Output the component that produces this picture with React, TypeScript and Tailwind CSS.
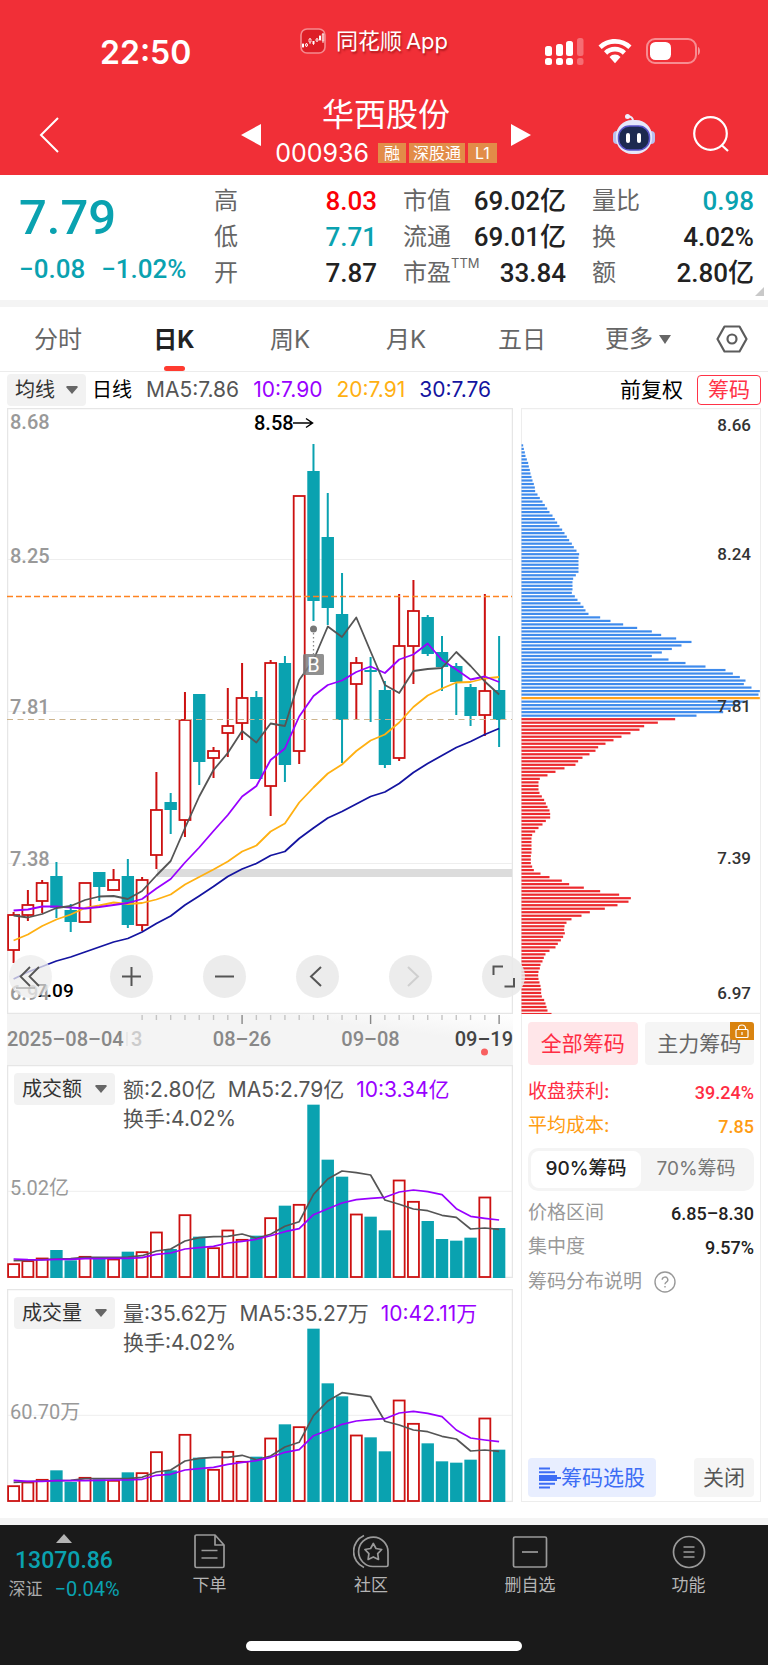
import React from "react";

type Kind = "u" | "d";
// kind, high, body top, body bottom, low (chart space)
type Candle = [Kind, number, number, number, number];

const CANDLES: Candle[] = [
  ["u", 912, 915, 950, 963], ["u", 890, 905, 915, 921], ["u", 880, 883, 901, 913],
  ["d", 862, 876, 908, 918], ["d", 904, 910, 922, 932], ["u", 883, 883, 922, 922],
  ["d", 872, 872, 887, 901], ["u", 869, 880, 890, 890], ["d", 859, 876, 925, 928],
  ["u", 877, 880, 925, 931], ["u", 772, 810, 855, 869], ["d", 793, 802, 810, 834],
  ["u", 692, 720, 820, 837], ["d", 694, 694, 762, 785], ["u", 747, 751, 758, 778],
  ["u", 688, 726, 733, 757], ["u", 663, 698, 723, 740], ["d", 691, 697, 779, 779],
  ["u", 660, 663, 786, 816], ["d", 656, 663, 765, 782], ["u", 496, 496, 751, 764],
  ["d", 444, 471, 601, 621], ["d", 493, 537, 608, 625], ["d", 573, 614, 720, 763],
  ["u", 657, 663, 684, 719], ["d", 657, 670, 672, 722], ["d", 681, 690, 765, 768],
  ["u", 594, 646, 758, 761], ["u", 580, 611, 646, 684], ["d", 615, 617, 654, 656],
  ["d", 636, 652, 667, 691], ["d", 663, 666, 682, 715], ["d", 684, 687, 716, 726],
  ["u", 594, 691, 715, 736], ["d", 636, 690, 720, 747],
];

const MA5 = [915.5, 917.5, 914, 908, 906, 900, 896.5, 896, 899, 891, 875.5, 861, 828, 796.5, 770, 753, 731, 742.5, 723.5, 726, 680, 660, 626.5, 637, 617.5, 651.5, 685, 693, 671, 669, 668, 652, 666, 681.5, 694.5];
const MA10 = [910.5, 909.5, 906.5, 906.5, 907.5, 908.5, 907, 905, 903, 899, 888.5, 879, 862.5, 847.5, 831, 815, 796.5, 786, 760, 748.5, 716.5, 696, 685, 680.5, 672, 666.5, 673, 659.5, 654.5, 643.5, 660, 669.5, 679.5, 676.5, 682];
const MA20 = [940.5, 934.5, 926, 919.5, 914.5, 908, 905.5, 902.5, 904, 903, 899.5, 894.5, 884.5, 877, 869.5, 861.5, 851.5, 845.5, 831.5, 823.5, 802.5, 787.5, 773.5, 764.5, 751, 740.5, 734.5, 722.5, 707, 695.5, 688.5, 682.5, 682, 678.5, 677];
const MA30 = [979, 972, 966.5, 961, 957, 952, 947, 942, 938.5, 932, 923.5, 916, 905, 896, 886.5, 876.5, 869, 863.5, 855.5, 851.5, 838.5, 828, 818, 811.5, 804, 796.5, 792, 783.5, 772.5, 763.5, 755.5, 747.5, 741.5, 734.5, 728.5];

// Volume panes are stored at three units per pixel
const AMOUNT = {
  bars: [612, 603, 595, 571, 602, 590, 596, 598, 576, 576, 517, 568, 465, 531, 564, 511, 539, 528, 474, 438, 434, 135, 300, 351, 463, 471, 512, 361, 425, 484, 538, 543, 534, 412, 505],
  ma5: [603, 602, 600, 598, 597, 593, 593, 593, 592, 588, 574, 568, 544, 534, 531, 530, 523, 536, 524, 500, 486, 404, 358, 334, 339, 346, 421, 434, 448, 453, 467, 473, 508, 505, 509],
  ma10: [598, 600, 601, 599, 599, 597, 597, 596, 596, 594, 584, 580, 568, 564, 560, 550, 545, 539, 528, 516, 507, 465, 447, 430, 420, 416, 413, 397, 391, 396, 405, 447, 470, 476, 481],
  top: 16,
  base: 655,
  grid: 395,
};
const VOLUME = {
  bars: [619, 608, 600, 573, 608, 594, 600, 603, 579, 580, 517, 573, 465, 535, 570, 516, 546, 532, 476, 435, 442, 148, 312, 351, 467, 474, 516, 362, 432, 492, 546, 550, 541, 416, 511],
  ma5: [609, 607, 605, 604, 603, 598, 598, 598, 598, 594, 578, 572, 545, 537, 534, 534, 528, 541, 530, 503, 489, 409, 365, 340, 346, 352, 426, 437, 452, 457, 471, 479, 515, 512, 516],
  ma10: [603, 606, 606, 604, 604, 604, 603, 602, 602, 600, 588, 585, 572, 568, 564, 555, 549, 544, 534, 519, 511, 469, 453, 435, 425, 421, 418, 401, 396, 402, 412, 452, 476, 482, 487],
  top: 29,
  base: 668,
  grid: 408,
};

// Share of chips held at each price step, from the highest price down
const CHIPS_ABOVE = [5, 7, 10, 12, 16, 20, 22, 25, 27, 30, 33, 37, 40, 41, 48, 55, 63, 70, 77, 84, 93, 100, 107, 114, 122, 129, 136, 143, 151, 157, 165, 173, 171, 171, 171, 171, 171, 163, 155, 153, 153, 153, 151, 160, 168, 177, 186, 192, 201, 236, 267, 305, 347, 391, 419, 464, 510, 480, 451, 421, 391, 441, 492, 552, 612, 634, 655, 672, 667, 690, 715, 711, 715, 670, 650, 628, 605, 525];
const CHIPS_BELOW = [461, 409, 368, 354, 327, 300, 276, 252, 230, 222, 204, 183, 170, 162, 129, 102, 78, 55, 51, 51, 51, 54, 61, 68, 73, 78, 84, 86, 86, 73, 63, 51, 41, 32, 30, 30, 30, 30, 30, 28, 28, 28, 32, 37, 57, 84, 121, 143, 187, 236, 293, 328, 321, 288, 250, 205, 180, 150, 135, 129, 128, 130, 125, 118, 109, 102, 84, 72, 67, 63, 57, 55, 51, 50, 51, 54, 57, 59, 59, 61, 68, 72, 75, 78, 90];
const AVERAGE_COST_ROW = 72;

const UP = "#cc1111";
const DOWN = "#0aa2b0";
const cx = (i: number) => 13.6 + 14.28 * i;
const line = (ys: number[]) => ys.map((y, i) => `${cx(i).toFixed(1)},${y.toFixed(1)}`).join(" ");

const NUM = "font-['Roboto','Noto_Sans_CJK_SC',sans-serif]";

function Header() {
  return (
    <header className="bg-[#f12f37] text-white">
      <div className="grid h-[82px] grid-cols-[1fr_auto_1fr] items-start">
        <div className="pl-[100px] pt-[33px] text-[32px] leading-10 font-semibold">22:50</div>
        <div className="flex items-center gap-2.5 pt-[25px] pr-5 text-[22px] leading-8 [text-shadow:1px_2px_2px_rgba(90,0,0,0.45)]">
          <svg width="26" height="26" viewBox="0 0 26 26" aria-hidden="true">
            <rect x="1" y="1" width="24" height="24" rx="6" fill="#dd1e26" stroke="#f58a8f" strokeWidth="1.6" />
            <path d="M3 15v5M6.500 15v4M10 10v6M13.500 13v4M17 10v4M20 7v6M23 5v10" stroke="#fff" strokeWidth=".8" />
            <path d="M2 16h2v3H2zM12.500 13h2v3h-2zM19 8h2v4h-2z" fill="#fff" />
            <path d="M5.500 16h2v2h-2zM9 11h2v3H9zM16 11h2v2h-2zM22.300 6h1.400v7h-1.400z" fill="#dd1e26" stroke="#fff" strokeWidth=".8" />
          </svg>
          <span className="flex gap-1"><span>同花顺</span><span>App</span></span>
        </div>
        <div className="flex items-center justify-end gap-3.5 pt-9 pr-[66px]">
          <svg width="40" height="30" viewBox="0 0 40 30" fill="#fff" aria-hidden="true">
            <rect x="1" y="10" width="7" height="10" rx="2.500" />
            <rect x="12" y="8" width="7" height="12" rx="2.500" />
            <rect x="22" y="5" width="7" height="15" rx="2.500" />
            <rect x="33" y="2" width="6.500" height="18" rx="2.500" opacity=".3" />
            <rect x="1" y="22" width="7" height="7" rx="2.500" />
            <rect x="12" y="22" width="7" height="7" rx="2.500" />
            <rect x="22" y="22" width="7" height="7" rx="2.500" />
            <rect x="33" y="22" width="6.500" height="7" rx="2.500" opacity=".3" />
          </svg>
          <svg width="34" height="26" viewBox="0 0 34 26" fill="#fff" aria-hidden="true">
            <path d="M17 1C10.500 1 4.700 3.500 .5 7.600l3.200 3.500A19 19 0 0 1 17 5.800a19 19 0 0 1 13.300 5.300l3.200-3.500A23.500 23.500 0 0 0 17 1z" />
            <path d="M17 8.700c-4.300 0-8.200 1.700-11 4.500l3.200 3.500A11 11 0 0 1 17 13.400a11 11 0 0 1 7.800 3.300l3.200-3.500a15.600 15.600 0 0 0-11-4.500z" />
            <path d="M17 16.600a8 8 0 0 0-5.500 2.300L17 25.300l5.500-6.400a8 8 0 0 0-5.500-2.300z" />
          </svg>
          <svg width="56" height="28" viewBox="0 0 56 28" aria-hidden="true">
            <rect x="1" y="2" width="49" height="24" rx="8" fill="none" stroke="#fff" strokeOpacity=".45" strokeWidth="2" />
            <rect x="4" y="5" width="21" height="18" rx="5.500" fill="#fff" />
            <path d="M52 10c2.600 1 2.600 7 0 8z" fill="#fff" opacity=".5" />
          </svg>
        </div>
      </div>
      <div className="grid h-[93px] grid-cols-[1fr_auto_1fr] items-center">
        <button type="button" aria-label="返回" className="ml-9 w-8">
          <svg width="28" height="40" viewBox="0 0 28 40" fill="none" stroke="#fff" strokeWidth="2" className="mt-3">
            <path d="M22 3 5 20l17 17" />
          </svg>
        </button>
        <div className="grid grid-cols-[20px_250px_20px] items-center pl-1">
          <button type="button" aria-label="上一只">
            <svg width="20" height="22" viewBox="0 0 20 22" fill="#fff" className="mt-3"><path d="M20 0v22L0 11z" /></svg>
          </button>
          <div className="pt-2">
            <h1 className="text-center text-[32px] leading-10 font-normal">华西股份</h1>
            <div className="flex items-center justify-center gap-[3px]">
              <span className="mr-1.5 text-[25px] leading-9">000936</span>
              <span className="h-5 bg-[#e28c48] px-1.5 text-[16px] leading-5">融</span>
              <span className="h-5 bg-[#e28c48] px-1 text-[16px] leading-5">深股通</span>
              <span className="h-5 bg-[#e28c48] px-[7px] text-[16px] leading-5">L1</span>
            </div>
          </div>
          <button type="button" aria-label="下一只">
            <svg width="20" height="22" viewBox="0 0 20 22" fill="#fff" className="mt-3"><path d="M0 0v22l20-11z" /></svg>
          </button>
        </div>
        <div className="mt-2.5 mr-[38px] flex items-center justify-end gap-9">
          <button type="button" aria-label="智能助手">
            <svg width="44" height="42" viewBox="0 0 44 42">
              <path d="M21 8c0-3-1-4.500-5-4.800" fill="none" stroke="#e9ebfb" strokeWidth="2" />
              <circle cx="15.500" cy="3.500" r="2.500" fill="#eef0ff" />
              <rect x="1" y="18" width="9" height="13" rx="4" fill="#b9c0ee" />
              <rect x="34" y="18" width="9" height="13" rx="4" fill="#b9c0ee" />
              <rect x="4" y="7" width="36" height="34" rx="16" fill="#e6e8fa" />
              <rect x="6.500" y="13" width="31" height="24" rx="11" fill="#1c2950" stroke="#5a55c9" strokeWidth="1.500" />
              <rect x="14" y="20" width="4" height="10" rx="2" fill="#fff" />
              <rect x="25" y="20" width="4" height="10" rx="2" fill="#fff" />
            </svg>
          </button>
          <button type="button" aria-label="搜索">
            <svg width="38" height="38" viewBox="0 0 38 38" fill="none" stroke="#fff" strokeWidth="2.200">
              <circle cx="18.500" cy="18.500" r="16.300" />
              <path d="m29.500 30 6.500 6" />
            </svg>
          </button>
        </div>
      </div>
    </header>
  );
}

function Stat({ label, value, color = "text-[#222]", sup }: { label: string; value: string; color?: string; sup?: string }) {
  return (
    <div className="flex items-center justify-between whitespace-nowrap">
      <dt className="flex text-[24px] leading-9 text-[#666]">
        {label}
        {sup && <span className="text-[13px] leading-4">{sup}</span>}
      </dt>
      <dd className={`${NUM} text-[26px] leading-9 font-medium ${color}`}>{value}</dd>
    </div>
  );
}

function Quote() {
  return (
    <section className="relative grid h-[125px] grid-cols-[169fr_163fr_163fr_162fr] gap-x-[26px] bg-white pt-2 pr-3.5 pl-[19px] max-sm:gap-x-2">
      <div className={`${NUM} font-medium whitespace-nowrap text-[#0aa2b0]`}>
        <div className="pt-1 text-[49px] leading-[62px]">7.79</div>
        <div className="flex gap-4 text-[26px] leading-10"><span>−0.08</span><span>−1.02%</span></div>
      </div>
      <dl>
        <Stat label="高" value="8.03" color="text-[#fb0007]" />
        <Stat label="低" value="7.71" color="text-[#0aa2b0]" />
        <Stat label="开" value="7.87" />
      </dl>
      <dl>
        <Stat label="市值" value="69.02亿" />
        <Stat label="流通" value="69.01亿" />
        <Stat label="市盈" value="33.84" sup="TTM" />
      </dl>
      <dl>
        <Stat label="量比" value="0.98" color="text-[#0aa2b0]" />
        <Stat label="换" value="4.02%" />
        <Stat label="额" value="2.80亿" />
      </dl>
      <svg width="9" height="9" viewBox="0 0 9 9" className="absolute right-1 bottom-1" aria-hidden="true"><path d="M9 0v9H0z" fill="#c9c9c9" /></svg>
    </section>
  );
}

const TABS = ["分时", "日K", "周K", "月K", "五日"];

function Tabs() {
  return (
    <nav className="grid h-[65px] grid-cols-[repeat(6,116fr)_72fr] border-b border-[#ececec] text-[24px] text-[#666]">
      {TABS.map((t) => (
        <button key={t} type="button" className={t === "日K" ? "flex flex-col items-center font-bold text-[#222]" : "flex flex-col items-center"}>
          <span className="pt-1 leading-[58px]">{t}</span>
          {t === "日K" && <span className="-mt-[3px] h-[5px] w-[21px] shrink-0 rounded-sm bg-[#ff3b30]" />}
        </button>
      ))}
      <button type="button" className="flex items-center justify-center gap-1.5">
        更多
        <svg width="12" height="9" viewBox="0 0 12 9" fill="#666"><path d="M0 0h12L6 9z" /></svg>
      </button>
      <button type="button" aria-label="设置" className="flex items-center justify-center">
        <svg width="32" height="28" viewBox="0 0 32 28" fill="none" stroke="#5c5c5c" strokeWidth="2.200">
          <path d="M8.500 1.500h15L30.500 14l-7 12.500h-15L1.500 14z" strokeLinejoin="round" />
          <circle cx="16" cy="14" r="4.500" />
        </svg>
      </button>
    </nav>
  );
}

function Picker({ label, value, className }: { label: string; value: string; className: string }) {
  return (
    <label className={`grid items-center rounded bg-[#f2f2f2] ${className}`}>
      <select aria-label={label} defaultValue={value} className="h-8 w-full appearance-none bg-transparent pl-2 text-[20px] leading-8 text-[#333] outline-none [grid-area:1/1]">
        <option>{value}</option>
      </select>
      <svg width="12" height="8" viewBox="0 0 12 8" fill="#666" className="pointer-events-none mr-2 justify-self-end [grid-area:1/1]" aria-hidden="true"><path d="M1 0h10l1 1-6 7-6-7z" /></svg>
    </label>
  );
}

function Legend() {
  return (
    <div className="flex h-9 items-center gap-3.5 px-[7px] text-[21px] whitespace-nowrap">
      <Picker label="指标" value="均线" className="-mr-2 w-[79px]" />
      <span className="text-[20px] text-black">日线</span>
      <span className="text-[#555]">MA5:7.86</span>
      <span className="text-[#9900ff]">10:7.90</span>
      <span className="text-[#ffb012]">20:7.91</span>
      <span className="text-[#1414a0]">30:7.76</span>
      <span className="ml-auto text-black">前复权</span>
      <button type="button" className="h-[30px] w-16 rounded border border-[#ff3347] leading-7 text-[#ff3347]">筹码</button>
    </div>
  );
}

function PriceChart() {
  const controls: { name: string; icon: React.ReactNode; off?: boolean }[] = [
    { name: "放大", icon: <path d="M12 21.500h19M21.500 12v19" /> },
    { name: "缩小", icon: <path d="M12 21.500h19" /> },
    { name: "左移", icon: <path d="M25 12 15 21.500 25 31" /> },
    { name: "右移", icon: <path d="M19 12l10 9.500L19 31" />, off: true },
    { name: "全屏", icon: <path d="M11.500 20v-8.500H21M32 23v8.500h-9.500" /> },
  ];
  return (
    <div className="relative">
      <svg viewBox="7 408 506 606" className={`block h-auto w-full ${NUM}`} role="img" aria-label="日K线">
        <rect x="7.500" y="408.500" width="505" height="605" fill="#fff" stroke="#e6e6e6" strokeWidth="1.500" />
        {[559.5, 711.5, 863.5].map((y) => <path key={y} d={`M8 ${y}h504`} stroke="#eeeeee" />)}
        <rect x="157" y="869" width="355" height="8" fill="#dcdcdc" />
        {CANDLES.map(([k, hi, top, bottom, lo], i) => {
          const x = cx(i);
          const c = k === "u" ? UP : DOWN;
          return (
            <g key={i} stroke={c} strokeWidth="2">
              <path d={`M${x} ${hi}V${top}M${x} ${bottom}V${lo}`} />
              {k === "u"
                ? <rect x={x - 5.500} y={top} width="11" height={bottom - top} fill="#fff" strokeWidth="1.800" />
                : <rect x={x - 6.200} y={top} width="12.400" height={bottom - top} fill={c} stroke="none" />}
            </g>
          );
        })}
        {[["8.68", 429], ["8.25", 563], ["7.81", 714], ["7.38", 866], ["6.94", 1000]].map(([t, y]) => (
          <text key={t} x="10" y={y} fontSize="20" fontWeight="500" fill="#999">{t}</text>
        ))}
        <path d="M7 596.500h505" stroke="#ff8320" strokeWidth="1.700" strokeDasharray="6 3" />
        <path d="M7 719.500h505" stroke="#cdb48d" strokeWidth="1.200" strokeDasharray="6 4.500" />
        <g fill="none" strokeWidth="1.800" strokeLinejoin="round">
          <polyline points={line(MA30)} stroke="#1414a0" />
          <polyline points={line(MA20)} stroke="#ffb012" />
          <polyline points={line(MA10)} stroke="#9900ff" />
          <polyline points={line(MA5)} stroke="#555" />
        </g>
        <rect x="303" y="654" width="21" height="21" rx="1.500" fill="#7d7d7d" fillOpacity=".85" />
        <text x="313.500" y="672" textAnchor="middle" fontSize="20" fill="#fff">B</text>
        <circle cx="313.500" cy="629" r="3.500" fill="#777" />
        <path d="M313.500 633v21" stroke="#888" strokeWidth="1.300" strokeDasharray="1.500 2.500" />
        <text x="254" y="430" fontSize="20" fontWeight="500">8.58</text>
        <path d="M293 423h19M306 418.500l6.500 4.500-6.500 4.500" fill="none" stroke="#000" strokeWidth="1.500" />
        <text x="36" y="997" fontSize="19" fontWeight="500">7.09</text>
        <path d="M16 988h19" stroke="#000" strokeWidth="1.500" />
      </svg>
      <div className="absolute -right-3 bottom-4 left-0.5 flex justify-between">
        <button type="button" aria-label="最早" className="size-[43px] rounded-full bg-[#ececec]/75">
          <svg viewBox="0 0 43 43" fill="none" stroke="#555" strokeWidth="1.800"><path d="M21 12l-9.500 9.500L21 31M30 12l-9.500 9.500L30 31" /></svg>
        </button>
        <div className="flex gap-[50px] max-sm:gap-2">
          {controls.map((c) => (
            <button key={c.name} type="button" aria-label={c.name} disabled={c.off} className="size-[43px] rounded-full bg-[#e9e9e9]/85">
              <svg viewBox="0 0 43 43" fill="none" stroke={c.off ? "#cfcfcf" : "#555"} strokeWidth="2">{c.icon}</svg>
            </button>
          ))}
        </div>
      </div>
    </div>
  );
}

function DateAxis() {
  const ticks = Array.from({ length: 26 }, (_, n) => n + 9);
  return (
    <svg viewBox="7 1014 506 51" className={`block h-auto w-full ${NUM}`} role="img" aria-label="日期">
      <defs>
        <linearGradient id="axis" x1="0" y1="0.800" x2="1" y2="0">
          <stop offset="0.700" stopColor="#f4f4f4" />
          <stop offset="1" stopColor="#ffffff" />
        </linearGradient>
      </defs>
      <rect x="7" y="1014" width="506" height="51" fill="url(#axis)" />
      {ticks.map((i) => (
        <path key={i} d={`M${cx(i)} 1015v${(i - 16) % 9 === 0 ? 9 : 5}`} stroke={(i - 16) % 9 === 0 ? "#888" : "#c4c4c4"} strokeWidth="1.400" />
      ))}
      <path d="M127 1032v14" stroke="#ddd" />
      <g fontSize="20" fontWeight="500" fill="#888">
        <text x="7" y="1046">2025–08–04</text>
        <text x="131" y="1046" fill="#ccc">3</text>
        <text x="242" y="1046" textAnchor="middle">08–26</text>
        <text x="370.500" y="1046" textAnchor="middle">09–08</text>
        <text x="513" y="1046" textAnchor="end" fill="#444">09–19</text>
      </g>
      <circle cx="484.500" cy="1052" r="3.500" fill="#f86060" />
    </svg>
  );
}

function VolumePane({ data, name, level, now, ma5, ma10 }: { data: typeof AMOUNT; name: string; level: string; now: string; ma5: string; ma10: string }) {
  const y = (v: number) => (v - data.top) / 3;
  const base = y(data.base);
  return (
    <div className="grid">
      <svg viewBox="7 0 506 213" className={`block h-auto w-full [grid-area:1/1] ${NUM}`} role="img" aria-label={name}>
        <rect x="7.500" y="0.500" width="505" height="212" fill="#fff" stroke="#e6e6e6" strokeWidth="1.500" />
        <path d={`M8 ${y(data.grid)}h504`} stroke="#eeeeee" />
        <text x="10" y={y(data.grid) + 4} fontSize="20" fill="#999">{level}</text>
        {data.bars.map((v, i) =>
          CANDLES[i][0] === "u"
            ? <rect key={i} x={cx(i) - 5.500} y={y(v) + 0.500} width="11" height={base - y(v) - 1.500} fill="#fff" stroke={UP} strokeWidth="1.800" />
            : <rect key={i} x={cx(i) - 6.200} y={y(v)} width="12.400" height={base - y(v)} fill={DOWN} />,
        )}
        <g fill="none" strokeWidth="1.700" strokeLinejoin="round">
          <polyline points={line(data.ma5.map(y))} stroke="#555" />
          <polyline points={line(data.ma10.map(y))} stroke="#9900ff" />
        </g>
      </svg>
      <div className="flex items-start gap-2 self-start px-[7px] pt-2 [grid-area:1/1]">
        <Picker label="副图指标" value={name} className="w-[101px] shrink-0" />
        <div className="text-[21px] leading-[29px] text-[#555]">
          <div className="flex gap-x-3 pt-0.5 whitespace-nowrap">
            <span>{now}</span>
            <span>{ma5}</span>
            <span className="text-[#9900ff]">{ma10}</span>
          </div>
          <div>换手:4.02%</div>
        </div>
      </div>
    </div>
  );
}

function ChipChart() {
  const rows = [...CHIPS_ABOVE, ...CHIPS_BELOW];
  return (
    <svg viewBox="521 408 240 606" className={`block h-auto w-full ${NUM}`} role="img" aria-label="筹码分布">
      <path d="M521 408.500h240M521 1013.500h240" stroke="#ededed" strokeWidth="1.500" />
      {rows.map((w, i) => {
        const y = 444.300 + 3.510 * i;
        const fill = i === AVERAGE_COST_ROW ? "#ffa11a" : i < CHIPS_ABOVE.length ? "#3f8bec" : "#ec2a2e";
        return <rect key={i} x="521.500" y={y} width={w / 3} height="2.200" fill={fill} />;
      })}
      <g fontSize="17" fontWeight="500" fill="#333" textAnchor="end">
        <text x="751" y="431">8.66</text>
        <text x="751" y="560">8.24</text>
        <text x="751" y="712">7.81</text>
        <text x="751" y="864">7.39</text>
        <text x="751" y="999">6.97</text>
      </g>
    </svg>
  );
}

function Pair({ label, value, labelColor, valueColor }: { label: string; value: string; labelColor: string; valueColor: string }) {
  return (
    <div className="flex h-[34px] items-center justify-between whitespace-nowrap">
      <dt className={`text-[19px] ${labelColor}`}>{label}</dt>
      <dd className={`${NUM} text-[18px] font-medium ${valueColor}`}>{value}</dd>
    </div>
  );
}

function ChipPanel() {
  return (
    <aside className="flex flex-col border-x border-b border-[#ededed] bg-white">
      <div className="-mx-px"><ChipChart /></div>
      <div className="flex flex-1 flex-col px-1.5 pt-2 pb-1">
        <div className="grid grid-cols-2 gap-[7px] text-[21px] leading-[43px] whitespace-nowrap">
          <button type="button" className="rounded bg-[#ffe6e9] text-[#ff2d43]">全部筹码</button>
          <button type="button" className="relative rounded bg-[#f5f5f5] text-[#666]">
            主力筹码
            <svg width="24" height="18" viewBox="0 0 24 18" className="absolute top-0 right-0" aria-hidden="true">
              <path d="M0 0h21a3 3 0 0 1 3 3v15H3a3 3 0 0 1-3-3z" fill="#d9830f" />
              <g fill="none" stroke="#fff" strokeWidth="1.200">
                <rect x="6" y="7.500" width="12" height="8" rx="1" />
                <path d="M8.500 7.500V6a3.500 3 0 0 1 7 0v1.500M12 10v3" />
              </g>
            </svg>
          </button>
        </div>
        <dl className="pt-2.5">
          <Pair label="收盘获利:" value="39.24%" labelColor="text-[#ff2d43]" valueColor="text-[#ff2d43]" />
          <Pair label="平均成本:" value="7.85" labelColor="text-[#ff9c12]" valueColor="text-[#ff9c12]" />
        </dl>
        <div className="mt-[5px] grid h-[43px] grid-cols-2 rounded-[10px] bg-[#f4f4f4] p-[3px] text-[19px]">
          <button type="button" className="rounded-lg bg-white font-medium text-[#222]">90%筹码</button>
          <button type="button" className="text-[#777]">70%筹码</button>
        </div>
        <dl className="pt-[5px]">
          <Pair label="价格区间" value="6.85–8.30" labelColor="text-[#999]" valueColor="text-[#222]" />
          <Pair label="集中度" value="9.57%" labelColor="text-[#999]" valueColor="text-[#222]" />
        </dl>
        <a href="#chips" className="flex h-9 items-center gap-3 text-[19px] text-[#999]">
          筹码分布说明
          <svg width="22" height="22" viewBox="0 0 22 22" fill="none" stroke="#999" strokeWidth="1.400" aria-hidden="true">
            <circle cx="11" cy="11" r="10" />
            <path d="M8.200 8.800a2.800 2.700 0 1 1 4.200 2.300c-1 .6-1.400 1-1.400 2.200M11 15v1.600" />
          </svg>
        </a>
        <div className="mt-auto flex justify-between text-[21px] leading-[39px] whitespace-nowrap">
          <button type="button" className="flex w-32 items-center justify-center rounded bg-[#e8eeff] text-[#3d6df5]">
            <svg width="22" height="22" viewBox="0 0 22 22" fill="none" stroke="#3d6df5" strokeWidth="2" aria-hidden="true">
              <path d="M0 1.500h11M0 5.300h16M0 9h18M0 11h22M0 13h18M0 16.800h16M0 20.500h11" />
            </svg>
            筹码选股
          </button>
          <button type="button" className="w-[60px] rounded bg-[#f5f5f5] text-[#555]">关闭</button>
        </div>
      </div>
    </aside>
  );
}

const ACTIONS: { label: string; icon: React.ReactNode }[] = [
  { label: "下单", icon: <path d="M3 2.500A1.500 1.500 0 0 1 4.500 1H23l9 10v21a1.500 1.500 0 0 1-1.500 1.500h-26A1.500 1.500 0 0 1 3 32zM23 1v10h9M9.500 16.500h16M9.500 24h16" /> },
  { label: "社区", icon: <><path d="M11 1.500a17.500 17.500 0 0 0 0 32M35 18v13a1.500 1.500 0 0 1-1.500 1.500H20A14.700 14.700 0 1 1 35 18z" /><path d="m20.300 9.500 2.700 5 5.700 1-4 4.200.8 5.700-5.200-2.500-5.200 2.500.8-5.700-4-4.200 5.700-1z" /></> },
  { label: "删自选", icon: <><rect x="1.500" y="3" width="33" height="30" rx="1.500" /><path d="M10 18h16" /></> },
  { label: "功能", icon: <><circle cx="18" cy="18" r="15.500" /><path d="M12.500 13h11M12.500 18h11M12.500 23h11" /></> },
];

function Footer() {
  return (
    <footer className="border-t-[7px] border-[#f4f4f4]">
      <div className="flex h-[140px] flex-col justify-between bg-[#1a1a1a] pb-3.5">
        <div className="grid grid-cols-[128fr_163fr_160fr_158fr_159fr] pt-[9px]">
          <button type="button" className={`${NUM} flex flex-col items-center pb-1`}>
            <svg width="16" height="9" viewBox="0 0 16 9" fill="#b4b4b4" aria-hidden="true"><path d="M8 0l8 9H0z" /></svg>
            <span className="mt-1 text-[23px] leading-7 font-medium text-[#0aa2b0]">13070.86</span>
            <span className="flex items-center gap-3 text-[17px] leading-7 text-[#aaa]">
              深证 <span className="text-[20px] text-[#0aa2b0]">−0.04%</span>
            </span>
          </button>
          {ACTIONS.map((a) => (
            <button key={a.label} type="button" className="flex flex-col items-center text-[17px] leading-[30px] text-[#b4b4b4]">
              <svg width="36" height="36" viewBox="0 0 36 36" fill="none" stroke="#9a9a9a" strokeWidth="1.700" strokeLinejoin="round" aria-hidden="true">{a.icon}</svg>
              {a.label}
            </button>
          ))}
        </div>
        <div className="mx-auto h-2.5 w-[276px] rounded-full bg-white" />
      </div>
    </footer>
  );
}

export default function App() {
  return (
    <div className="min-h-screen bg-white font-['Inter','Noto_Sans_CJK_SC',sans-serif] text-[#222]">
      <Header />
      <Quote />
      <div className="h-[7px] bg-[#f4f4f4]" />
      <Tabs />
      <Legend />
      <main className="grid grid-cols-[506fr_240fr] gap-2 px-[7px] pb-4">
        <div>
          <PriceChart />
          <DateAxis />
          <div className="grid gap-[11px]">
            <VolumePane data={AMOUNT} name="成交额" level="5.02亿" now="额:2.80亿" ma5="MA5:2.79亿" ma10="10:3.34亿" />
            <VolumePane data={VOLUME} name="成交量" level="60.70万" now="量:35.62万" ma5="MA5:35.27万" ma10="10:42.11万" />
          </div>
        </div>
        <ChipPanel />
      </main>
      <Footer />
    </div>
  );
}
